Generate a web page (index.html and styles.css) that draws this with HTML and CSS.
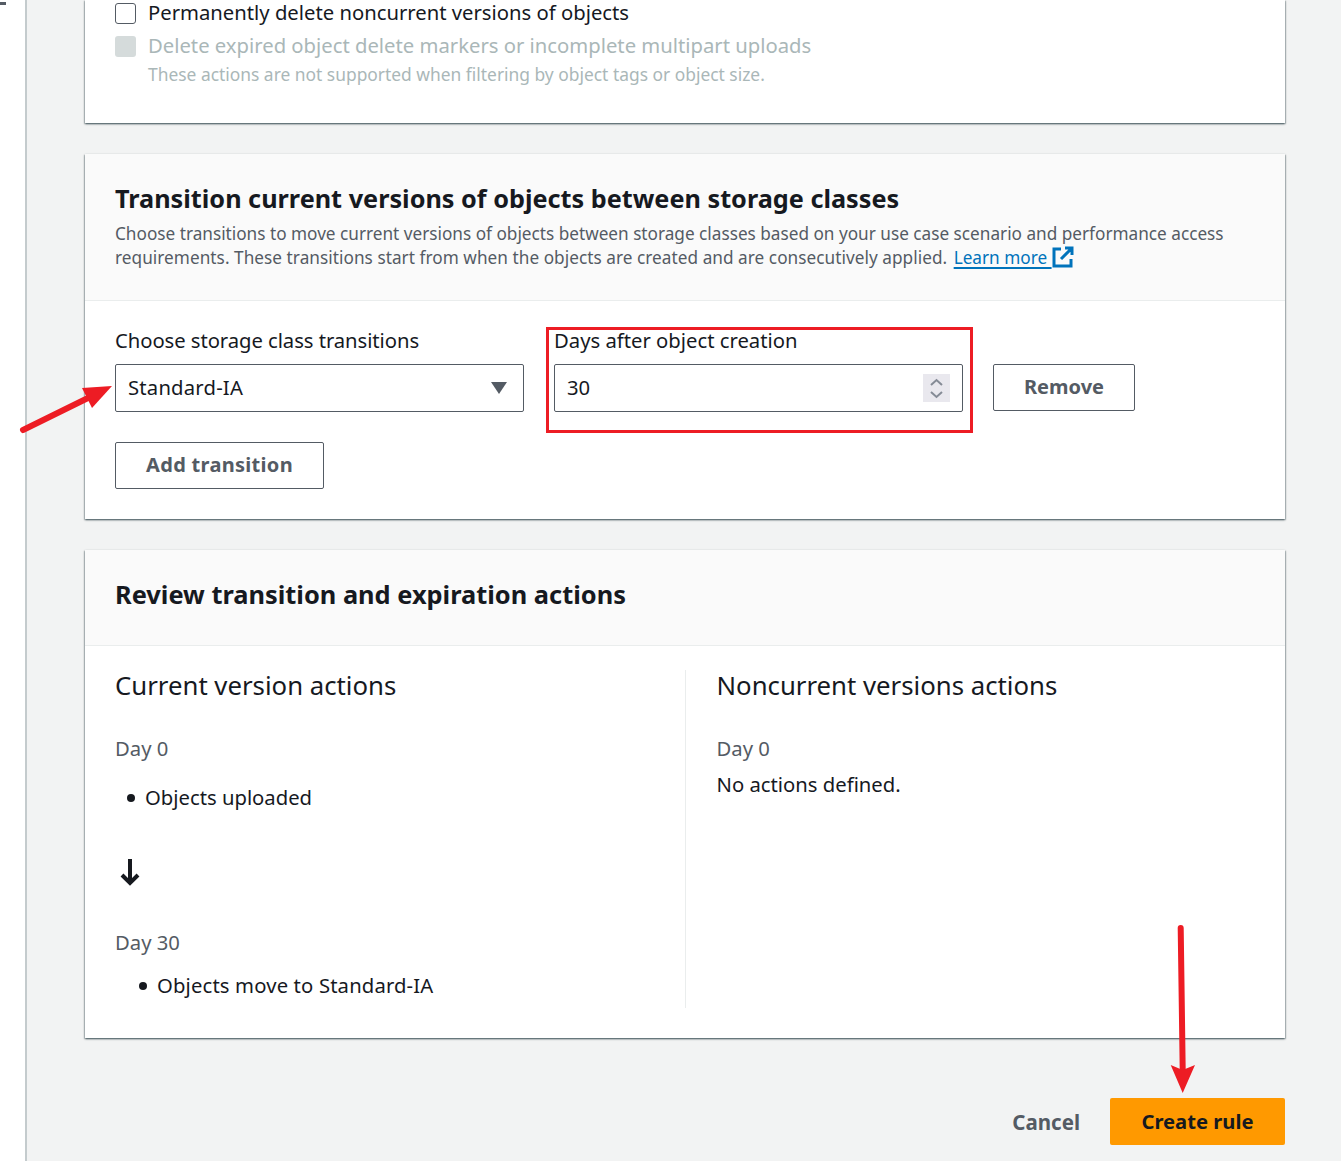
FILE: index.html
```html
<!DOCTYPE html>
<html>

<head>
  <meta charset="utf-8">
  <meta name="viewport" content="width=device-width">
  <title>Create lifecycle rule</title>
  <link rel="stylesheet" href="styles.css">
</head>

<body>
  <div class="page">
    <div class="nav-strip"><span class="nav-mark"></span></div>

    <main>
      <!-- delete options, cut off by the top of the window -->
      <section class="card card-top">
        <label class="check-row">
          <span class="checkbox"></span>
          <span>Permanently delete noncurrent versions of objects</span>
        </label>
        <label class="check-row disabled">
          <span class="checkbox"></span>
          <span>Delete expired object delete markers or incomplete multipart uploads</span>
        </label>
        <p class="check-note">These actions are not supported when filtering by object tags or object size.</p>
      </section>

      <section class="card">
        <header class="card-head head-transition">
          <h2>Transition current versions of objects between storage classes</h2>
          <p class="desc">Choose transitions to move current versions of objects between storage classes based on your use case scenario and performance access <span class="desc-tail">requirements. These transitions start from when the objects are created and are consecutively applied.</span> <a href="#">Learn more <svg class="ext-icon" viewBox="0 0 22 22"><path d="M9 3H2v17h17v-7M13 2h7v7M20 2 9 13"/></svg></a></p>
        </header>
        <div class="transition-body">
          <div class="transition-row">
            <div class="field field-class">
              <label>Choose storage class transitions</label>
              <div class="control select">
                <span>Standard-IA</span>
                <span class="caret"></span>
              </div>
            </div>
            <div class="field field-days">
              <label>Days after object creation</label>
              <div class="control number">
                <span>30</span>
                <svg class="spinner" viewBox="0 0 27 28"><path d="M8 11l5.5-5 5.5 5M8 18l5.5 5 5.5-5"/></svg>
              </div>
            </div>
            <button class="btn btn-remove">Remove</button>
          </div>
          <button class="btn btn-add">Add transition</button>
        </div>
      </section>

      <section class="card">
        <header class="card-head head-review">
          <h2>Review transition and expiration actions</h2>
        </header>
        <div class="review-body">
          <div class="review-col col-current">
            <h3>Current version actions</h3>
            <div class="day day-first">Day 0</div>
            <ul class="steps">
              <li>Objects uploaded</li>
            </ul>
            <svg class="down-arrow" viewBox="0 0 22 28"><path d="M11 1v24M3 17l8 8 8-8"/></svg>
            <div class="day">Day 30</div>
            <ul class="steps steps-last">
              <li>Objects move to Standard-IA</li>
            </ul>
          </div>
          <div class="review-col col-noncurrent">
            <h3>Noncurrent versions actions</h3>
            <div class="day day-first">Day 0</div>
            <p class="none">No actions defined.</p>
          </div>
        </div>
      </section>

      <footer class="actions">
        <a class="cancel" href="#">Cancel</a>
        <button class="btn btn-primary">Create rule</button>
      </footer>
    </main>

    <!-- red annotations drawn on top of the screenshot -->
    <svg class="marks" viewBox="0 0 1341 1161">
      <rect class="mark-box" x="547.5" y="328.5" width="424" height="103"/>
      <path class="mark-line" d="M23 430 90 397"/>
      <path class="mark-head" d="M112 386 82 388 92 408z"/>
      <path class="mark-line" d="M1180.700 928 1182.700 1070"/>
      <path class="mark-head" d="M1182.700 1093 1170.700 1065 1182.700 1070 1195 1065z"/>
    </svg>
  </div>
</body>

</html>
```

FILE: styles.css
```css
* {
  box-sizing: border-box;
}

html, body {
  margin: 0;
  padding: 0;
}

body {
  background-color: #f2f3f3;
  color: #16191f;
  font-family: "Noto Sans", "Open Sans", sans-serif;
  font-size: 20.25px;
  line-height: 24px;
}

.page {
  position: relative;
  display: flex;
  width: 1341px;
  height: 1161px;
  overflow: hidden;
}

.nav-strip {
  flex: none;
  width: 27px;
  background-color: #fff;
  border-right: 2px solid #c4cbcd;
}

.nav-mark {
  display: block;
  width: 6px;
  height: 3px;
  margin-top: 2px;
  background-color: #545b64;
}

main {
  flex: none;
  display: flex;
  flex-direction: column;
  width: 1200px;
  margin-left: 58px;
}

.card {
  background-color: #fff;
  box-shadow: 0 1px 2px 0 rgba(0, 28, 36, 0.6), 1px 1px 1px 0 rgba(0, 28, 36, 0.15), -1px 1px 1px 0 rgba(0, 28, 36, 0.15);
  margin-bottom: 31px;
}

.card-top {
  height: 123px;
  padding: 3px 30px 0;
}

.check-row {
  display: flex;
  gap: 12px;
  height: 21px;
  line-height: 19px;
  margin-bottom: 12px;
}

.check-row.disabled {
  margin-bottom: 5px;
}

.checkbox {
  flex: none;
  width: 21px;
  height: 21px;
  border: 1.5px solid #545b64;
  border-radius: 3px;
  background-color: #fff;
}

.disabled {
  color: #aab7b8;
}

.disabled .checkbox {
  border: none;
  background-color: #d5dbdb;
}

.check-note {
  margin: 0 0 0 33px;
  color: #aab7b8;
  font-size: 17.4px;
  line-height: 24px;
}

.card-head {
  background-color: #fafafa;
  border-bottom: 1px solid #eaeded;
  padding: 0 30px;
}

.card-head h2 {
  margin: 0;
  font-size: 25.26px;
  line-height: 32px;
  font-weight: 700;
}

.head-transition {
  height: 147px;
  padding-top: 28px;
}

.head-review {
  height: 96px;
  padding-top: 28px;
}

.head-review h2 {
  font-size: 25.4px;
}

.desc {
  margin: 8px 0 0;
  color: #545b64;
  font-size: 17.2px;
  line-height: 24px;
}

.desc-tail {
  letter-spacing: 0.045px;
}

.desc a {
  margin-left: 2px;
  color: #0073bb;
  text-decoration: underline;
  text-decoration-thickness: 2px;
  text-underline-offset: 3px;
}

.ext-icon {
  width: 22px;
  height: 22px;
  vertical-align: -4px;
  fill: none;
  stroke: #0073bb;
  stroke-width: 3;
}

.transition-body {
  padding: 27px 30px 30px;
}

.transition-row {
  display: flex;
  align-items: flex-end;
  gap: 30px;
  margin-bottom: 30px;
}

.field {
  width: 409px;
}

.field label {
  display: block;
  margin-bottom: 12px;
  line-height: 24px;
}

.field-class label {
  letter-spacing: -0.06px;
}

.control {
  display: flex;
  align-items: center;
  justify-content: space-between;
  height: 48px;
  padding: 0 12px;
  background-color: #fff;
  border: 1px solid #545b64;
  border-radius: 2px;
}

.control span:first-child {
  margin-top: -2px;
}

.select span:first-child {
  letter-spacing: 0.2px;
}

.caret {
  width: 0;
  height: 0;
  margin-right: 4px;
  border-left: 8px solid transparent;
  border-right: 8px solid transparent;
  border-top: 12px solid #545b64;
}

.spinner {
  width: 27px;
  height: 28px;
  background-color: #e9e8ee;
  fill: none;
  stroke: #858b96;
  stroke-width: 2;
}

.btn {
  display: block;
  height: 47px;
  padding: 0 0 2px;
  font-family: inherit;
  font-size: 20px;
  font-weight: 700;
  line-height: 24px;
  border-radius: 2px;
  cursor: pointer;
}

.btn-remove, .btn-add {
  background-color: #fff;
  border: 1px solid #545b64;
  color: #545b64;
}

.btn-remove {
  width: 142px;
  margin-bottom: 1px;
}

.btn-add {
  width: 209px;
  letter-spacing: 0.3px;
}

.review-body {
  display: flex;
  height: 392px;
  padding: 24px 0 30px;
}

.review-col {
  width: 50%;
  padding-left: 31px;
}

.col-current {
  width: 601px;
  padding-left: 30px;
  border-right: 1px solid #eaeded;
}

.review-col h3 {
  margin: 0;
  font-size: 25.75px;
  line-height: 31px;
  font-weight: 400;
}

.day {
  color: #545b64;
  line-height: 24px;
}

.day-first {
  margin-top: 35px;
}

.steps {
  margin: 25px 0 0;
  padding: 0 0 0 12px;
  list-style: none;
}

.steps li {
  display: flex;
  align-items: center;
  gap: 10px;
}

/* round dot, a bit bigger than the default marker */
.steps li::before {
  content: "";
  flex: none;
  width: 8px;
  height: 8px;
  margin-top: 2px;
  border-radius: 50%;
  background-color: #16191f;
}

.steps-last {
  margin-top: 19px;
  padding-left: 24px;
  letter-spacing: 0.15px;
}

.none {
  margin: 12px 0 0;
}

.down-arrow {
  display: block;
  width: 22px;
  height: 28px;
  margin: 49px 0 44px 4px;
  fill: none;
  stroke: #16191f;
  stroke-width: 4;
}

.actions {
  display: flex;
  align-items: center;
  justify-content: flex-end;
  gap: 30px;
  margin-top: 29px;
}

.cancel {
  color: #545b64;
  font-size: 20.5px;
  font-weight: 700;
  text-decoration: none;
}

.btn-primary {
  width: 175px;
  background-color: #ff9900;
  border: none;
  color: #16191f;
  font-size: 20.2px;
}

.marks {
  position: absolute;
  top: 0;
  left: 0;
  width: 1341px;
  height: 1161px;
  pointer-events: none;
}

.mark-box {
  fill: none;
  stroke: #ed1c24;
  stroke-width: 3;
}

.mark-line {
  fill: none;
  stroke: #ed1c24;
  stroke-width: 6;
  stroke-linecap: round;
}

.mark-head {
  fill: #ed1c24;
}
```
